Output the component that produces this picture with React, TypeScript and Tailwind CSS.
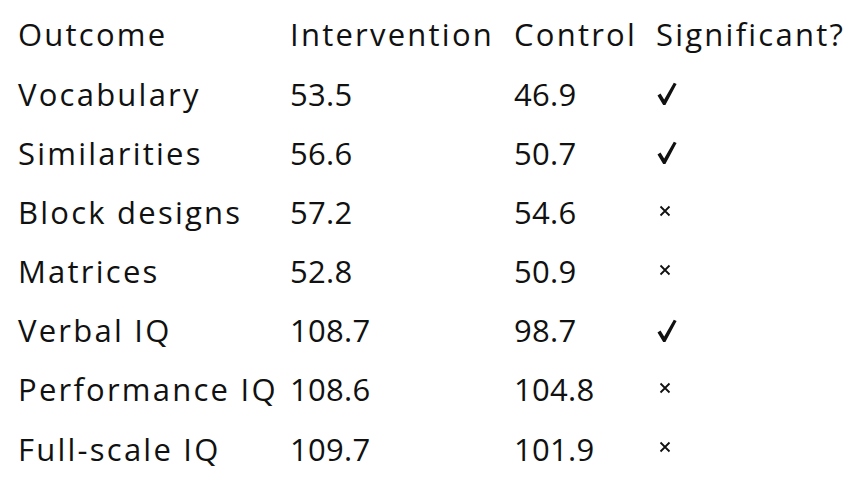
const rows: [string, string, string, boolean][] = [
  ["Vocabulary", "53.5", "46.9", true],
  ["Similarities", "56.6", "50.7", true],
  ["Block designs", "57.2", "54.6", false],
  ["Matrices", "52.8", "50.9", false],
  ["Verbal IQ", "108.7", "98.7", true],
  ["Performance IQ", "108.6", "104.8", false],
  ["Full-scale IQ", "109.7", "101.9", false],
];

function Check() {
  return (
    <svg width="20" height="24" viewBox="0 0 20 24" className="ml-[1px] mt-[1px]">
      <path d="M0.5 13.5 L3.5 11.5 L7.2 17.5 L16.8 0.8 L19.6 2 L8.4 23 L6.2 23 Z" fill="#111" />
    </svg>
  );
}

function Cross() {
  return (
    <svg width="12" height="12" viewBox="0 0 12 12" className="ml-[3px] mb-[3px]">
      <path d="M1.5 1.5 L10.5 10.5 M10.5 1.5 L1.5 10.5" stroke="#111" strokeWidth="1.8" />
    </svg>
  );
}

function Row({ cells, head }: { cells: React.ReactNode[]; head?: boolean }) {
  return (
    <div className="grid grid-cols-[272px_224px_142px_1fr] h-[59.2px] items-center">
      {cells.map((c, i) => (
        <div
          key={i}
          className={
            "whitespace-nowrap flex items-center " +
            (!head && (i === 1 || i === 2) ? "tracking-[0.01em]" : "")
          }
        >
          {c}
        </div>
      ))}
    </div>
  );
}

export default function App() {
  return (
    <div className="w-[866px] h-[500px] bg-white text-[#111] pl-[18px] pt-[5px] font-['Open_Sans',sans-serif] text-[31px] tracking-[0.072em]">
      <Row head cells={["Outcome", "Intervention", "Control", "Significant?"]} />
      {rows.map(([name, a, b, sig]) => (
        <Row key={name} cells={[name, a, b, sig ? <Check /> : <Cross />]} />
      ))}
    </div>
  );
}
